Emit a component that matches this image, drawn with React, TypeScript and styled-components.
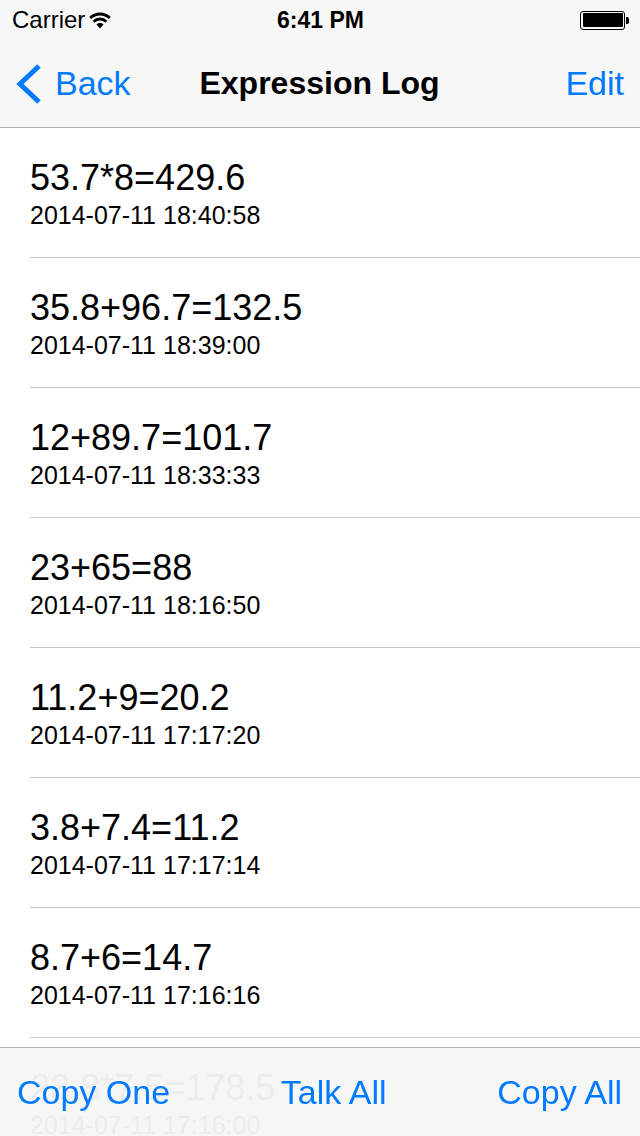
import styled, { createGlobalStyle } from 'styled-components';

interface LogEntry {
  expression: string;
  date: string;
}

const entries: LogEntry[] = [
  { expression: '53.7*8=429.6', date: '2014-07-11 18:40:58' },
  { expression: '35.8+96.7=132.5', date: '2014-07-11 18:39:00' },
  { expression: '12+89.7=101.7', date: '2014-07-11 18:33:33' },
  { expression: '23+65=88', date: '2014-07-11 18:16:50' },
  { expression: '11.2+9=20.2', date: '2014-07-11 17:17:20' },
  { expression: '3.8+7.4=11.2', date: '2014-07-11 17:17:14' },
  { expression: '8.7+6=14.7', date: '2014-07-11 17:16:16' },
  { expression: '23.8*7.5=178.5', date: '2014-07-11 17:16:00' },
];

const BLUE = '#007aff';

const WifiIcon = () => (
  <svg width="22" height="18" viewBox="0 0 22 18">
    <path d="M1.1 7.1 A14 14 0 0 1 20.9 7.1" fill="none" stroke="#000" strokeWidth="2.8" />
    <path d="M4.64 10.64 A9 9 0 0 1 17.36 10.64" fill="none" stroke="#000" strokeWidth="2.8" />
    <path d="M11 17.5 L7.46 13.46 A5 5 0 0 1 14.54 13.46 Z" fill="#000" />
  </svg>
);

const BackChevron = () => (
  <svg width="28" height="42" viewBox="0 0 28 42">
    <polyline points="24,3 5,21 24,39" fill="none" stroke={BLUE} strokeWidth="5" />
  </svg>
);

const App = () => {
  return (
    <>
      <GlobalStyle />
      <Header>
        <StatusBar>
          <Carrier>
            <span>Carrier</span>
            <WifiIcon />
          </Carrier>
          <Clock>6:41 PM</Clock>
          <Battery>
            <BatteryBody>
              <BatteryFill />
            </BatteryBody>
            <BatteryNub />
          </Battery>
        </StatusBar>
        <NavBar>
          <BackButton>
            <BackChevron />
            <span>Back</span>
          </BackButton>
          <Title>Expression Log</Title>
          <EditButton>Edit</EditButton>
        </NavBar>
      </Header>
      <List>
        {entries.map((entry) => (
          <Row key={entry.date}>
            <RowInner>
              <Expression>{entry.expression}</Expression>
              <DateText>{entry.date}</DateText>
            </RowInner>
          </Row>
        ))}
      </List>
      <Toolbar>
        <ToolButton>Copy One</ToolButton>
        <ToolButton>Talk All</ToolButton>
        <ToolButton>Copy All</ToolButton>
      </Toolbar>
    </>
  );
};

export default App;

const GlobalStyle = createGlobalStyle`
  html, body {
    margin: 0;
    padding: 0;
    height: 100%;
    overflow: hidden;
    background: #ffffff;
    font-family: "Liberation Sans", Arial, sans-serif;
    -webkit-font-smoothing: antialiased;
  }
`;

const Header = styled.header`
  background-color: #f7f7f7;
  border-bottom: 1px solid #b2b2b2;
`;

const StatusBar = styled.div`
  height: 40px;
  display: grid;
  grid-template-columns: 1fr auto 1fr;
  align-items: center;
  padding: 0 11px 0 12px;
  color: #000;
`;

const Carrier = styled.div`
  display: flex;
  align-items: center;
  gap: 4px;
  font-size: 24px;
`;

const Clock = styled.div`
  font-size: 23px;
  font-weight: bold;
`;

const Battery = styled.div`
  justify-self: end;
  display: flex;
  align-items: center;
`;

const BatteryBody = styled.div`
  width: 45px;
  height: 19px;
  box-sizing: border-box;
  border: 1.5px solid #000;
  border-radius: 3px;
  padding: 1.5px;
`;

const BatteryFill = styled.div`
  width: 100%;
  height: 100%;
  background: #000;
  border-radius: 1px;
`;

const BatteryNub = styled.div`
  width: 3px;
  height: 7px;
  margin-left: 1px;
  background: #000;
  border-radius: 0 2px 2px 0;
`;

const NavBar = styled.nav`
  height: 87px;
  display: grid;
  grid-template-columns: 1fr auto 1fr;
  align-items: center;
  padding: 0 16px 0 15px;
`;

const BackButton = styled.div`
  display: flex;
  align-items: center;
  gap: 12px;
  color: ${BLUE};
  font-size: 34px;
`;

const Title = styled.div`
  font-size: 32px;
  font-weight: bold;
  color: #000;
`;

const EditButton = styled.div`
  justify-self: end;
  color: ${BLUE};
  font-size: 34px;
`;

const List = styled.ul`
  list-style: none;
  margin: 0;
  padding: 0;
`;

const Row = styled.li`
  padding-left: 30px;
  background: #fff;
`;

const RowInner = styled.div`
  height: 130px;
  box-sizing: border-box;
  padding-top: 30px;
  border-bottom: 1px solid #c8c7cc;
`;

const Expression = styled.div`
  font-size: 36px;
  line-height: 40px;
  color: #000;
`;

const DateText = styled.div`
  margin-top: 3px;
  font-size: 25px;
  line-height: 28px;
  color: #000;
`;

const Toolbar = styled.footer`
  position: fixed;
  left: 0;
  right: 0;
  bottom: 0;
  height: 88px;
  display: flex;
  justify-content: space-between;
  align-items: center;
  padding: 0 18px 0 17px;
  border-top: 1px solid #b2b2b2;
  background-color: rgba(246, 246, 246, 0.96);
`;

const ToolButton = styled.div`
  color: ${BLUE};
  font-size: 34px;
`;
